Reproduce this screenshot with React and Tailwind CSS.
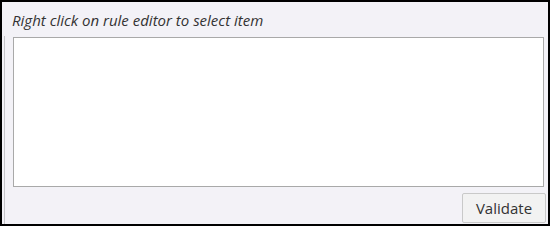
export default function App(){
  return (
    <div className="w-[550px] h-[226px] border-2 border-black bg-[#f3f2f7] flex flex-col font-['Open_Sans',sans-serif]">
      <div className="h-[34px] pl-[10px] pt-[8px] text-[15px] italic text-[#333] leading-[20px]">
        Right click on rule editor to select item
      </div>
      <div className="flex-1 ml-[2px] border-l border-[#c4c4c8] pl-[8px] pr-[2px] pt-[1px] flex flex-col">
        <textarea className="h-[150px] mr-[2px] border border-[#a9a9a9] bg-white resize-none outline-none" />
        <div className="flex justify-end mt-[6px]">
          <button className="h-[30px] w-[84px] border border-[#c9c9c9] rounded-[2px] bg-[#f2f2f2] text-[15px] text-[#333]">
            Validate
          </button>
        </div>
      </div>
    </div>
  )
}
